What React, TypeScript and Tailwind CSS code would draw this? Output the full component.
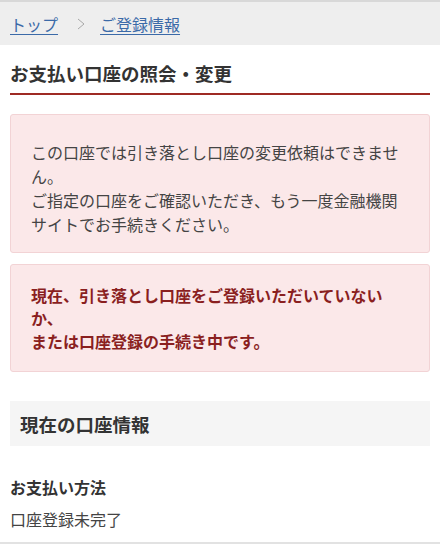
import React from "react";

export default function App() {
  return (
    <div
      className="w-[440px] min-h-[547px] bg-white text-[#333]"
      style={{ fontFamily: '"Noto Sans CJK JP", "Noto Sans", sans-serif' }}
    >
      {/* breadcrumb */}
      <div className="border-t-2 border-[#d8d8d8] bg-[#eeeeee] h-[45px] flex items-center px-[10px] text-[16px] leading-[22px]">
        <a className="text-[#3b6aa8] underline underline-offset-[3px] decoration-1">トップ</a>
        <svg width="8" height="12" viewBox="0 0 8 12" className="ml-[19px] mr-[15px]">
          <polyline points="1,1 7,6 1,11" fill="none" stroke="#a8a8a8" strokeWidth="1" />
        </svg>
        <a className="text-[#3b6aa8] underline underline-offset-[3px] decoration-1">ご登録情報</a>
      </div>

      {/* title */}
      <div className="mx-[10px] pt-[17px] pb-[9px] border-b-2 border-[#9e2a24]">
        <h1 className="text-[18.5px] leading-[22px] font-bold text-[#333]">お支払い口座の照会・変更</h1>
      </div>

      {/* box 1 */}
      <div className="mx-[10px] mt-[19px] bg-[#fbe8e9] border border-[#f2d3d5] rounded-[3px] pl-[20px] pr-[20px] pt-[25px] pb-[16px]">
        <p className="text-[16px] leading-[24px] text-[#444]">
          この口座では引き落とし口座の変更依頼はできません。
          <br />
          ご指定の口座をご確認いただき、もう一度金融機関サイトでお手続きください。
        </p>
      </div>

      {/* box 2 */}
      <div className="mx-[10px] mt-[11px] bg-[#fbe8e9] border border-[#f2d3d5] rounded-[3px] pl-[20px] pr-[20px] pt-[19px] pb-[18px]">
        <p className="text-[16px] leading-[23px] font-bold text-[#8a1f1f]">
          現在、引き落とし口座をご登録いただいていないか、
          <br />
          または口座登録の手続き中です。
        </p>
      </div>

      {/* section header */}
      <div className="mx-[10px] mt-[29px] h-[45px] bg-[#f5f5f5] flex items-center px-[10px]">
        <h2 className="text-[18.5px] leading-[22px] font-bold text-[#333]">現在の口座情報</h2>
      </div>

      <div className="px-[10px] pt-[30px]">
        <h3 className="text-[16px] leading-[22px] font-bold text-[#333]">お支払い方法</h3>
        <p className="mt-[10px] text-[16px] leading-[22px] text-[#444]">口座登録未完了</p>
      </div>

      <div className="mt-[12px] h-[2px] bg-[#e2e2e2]" />
    </div>
  );
}
